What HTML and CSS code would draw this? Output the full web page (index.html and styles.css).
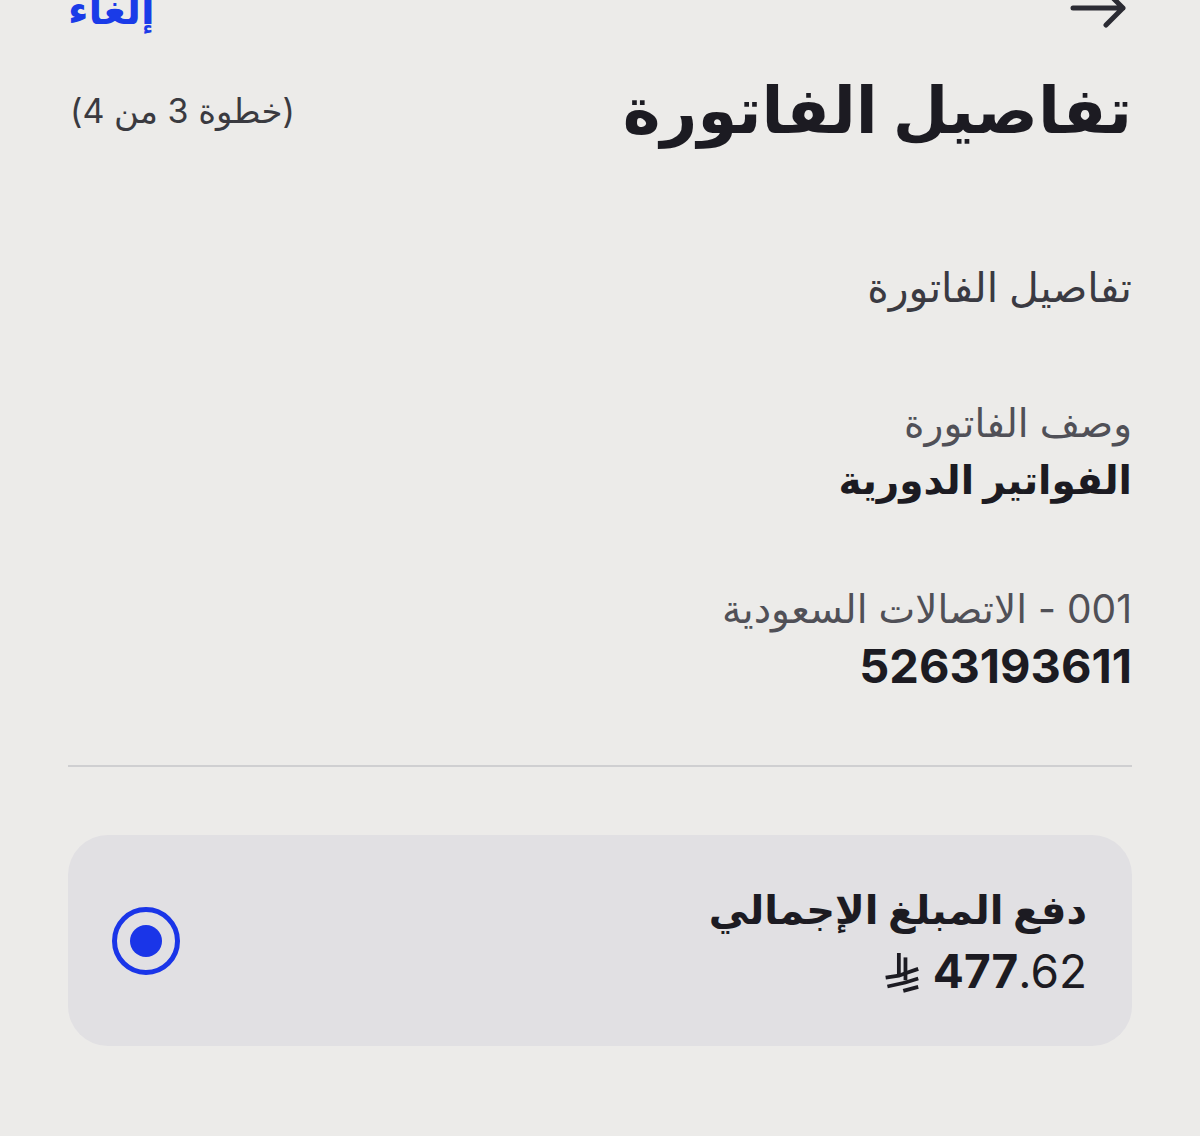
FILE: index.html
```html
<!DOCTYPE html>
<html lang="ar" dir="rtl">
<head>
<meta charset="utf-8">
<title>تفاصيل الفاتورة</title>
<link rel="stylesheet" href="styles.css">
</head>
<body>
<div class="page">
  <div class="topbar">
    <span class="back">
      <svg width="58" height="44" viewBox="0 0 58 44" aria-hidden="true">
        <path d="M3 22 H53 M36 5 L53 22 L36 39" fill="none" stroke="#2b2b33" stroke-width="5" stroke-linecap="round" stroke-linejoin="round"/>
      </svg>
    </span>
    <span class="cancel">إلغاء</span>
  </div>
  <div class="header">
    <h1 class="title">تفاصيل الفاتورة</h1>
    <span class="step">(خطوة 3 من 4)</span>
  </div>
  <h2 class="section">تفاصيل الفاتورة</h2>
  <div class="field">
    <div class="label">وصف الفاتورة</div>
    <div class="value">الفواتير الدورية</div>
  </div>
  <div class="field field-2">
    <div class="label">001 - الاتصالات السعودية</div>
    <div class="value num">5263193611</div>
  </div>
  <hr class="divider">
  <div class="card">
    <div class="card-text">
      <div class="card-title">دفع المبلغ الإجمالي</div>
      <div class="amount"><svg class="riyal" width="37" height="43" viewBox="0 0 42 46" aria-hidden="true"><g fill="none" stroke="#1c1b22" stroke-width="4.3" stroke-linecap="butt"><path d="M18 2 V27"/><path d="M25.5 7 V33"/><path d="M3 30 L18 27.8 L25.5 25 L40 20"/><path d="M5 40 L25.5 35.5 L40 31"/><path d="M23 45 L40 40.5"/></g></svg><span class="int">477</span><span class="dec">.62</span></div>
    </div>
    <span class="radio"><span class="dot"></span></span>
  </div>
</div>
</body>
</html>
```
FILE: styles.css
```css
html, body {
  margin: 0;
  padding: 0;
  background: #ecebe9;
}
body {
  font-family: Inter, "DejaVu Sans", "Noto Sans", sans-serif;
  color: #1c1b22;
}
.page {
  padding: 0 68px;
  direction: rtl;
}
.topbar {
  display: flex;
  justify-content: space-between;
  align-items: center;
  height: 44px;
  margin-top: -14px;
}
.back {
  display: flex;
  margin-right: 4px;
}
.cancel {
  color: #1a3be8;
  font-size: 40px;
  font-weight: 700;
  line-height: 44px;
  margin-top: 4px;
}
.header {
  display: flex;
  justify-content: space-between;
  align-items: center;
  margin-top: 40px;
  height: 80px;
}
.title {
  margin: 0;
  font-size: 64px;
  font-weight: 700;
  line-height: 80px;
}
.step {
  font-size: 34px;
  color: #3a3a40;
  margin-left: 2px;
}
.section {
  margin: 112px 0 0;
  font-size: 41px;
  font-weight: 500;
  color: #3a3a42;
  line-height: 50px;
}
.field {
  margin-top: 84px;
}
.field-2 {
  margin-top: 72px;
}
.label {
  font-size: 39px;
  color: #505057;
  line-height: 54px;
}
.value {
  font-size: 39px;
  font-weight: 700;
  line-height: 60px;
}
.num {
  font-size: 47px;
}
.divider {
  margin: 69px 0 0;
  border: 0;
  height: 2px;
  background: #cfcfd1;
}
.card {
  margin-top: 68px;
  height: 211px;
  background: #e1e0e3;
  border-radius: 40px;
  display: flex;
  justify-content: space-between;
  align-items: center;
  padding: 0 45px 0 44px;
}
.card-title {
  font-size: 40px;
  font-weight: 700;
  line-height: 60px;
}
.amount {
  display: flex;
  direction: ltr;
  justify-content: flex-end;
  align-items: center;
  font-size: 46px;
  line-height: 62px;
}
.amount .int { font-weight: 700; }
.amount .dec { font-weight: 400; }
.riyal {
  margin-right: 13px;
  margin-top: 2px;
}
.radio {
  width: 58px;
  height: 58px;
  border: 5px solid #1a35e8;
  border-radius: 50%;
  display: flex;
  align-items: center;
  justify-content: center;
}
.dot {
  width: 32px;
  height: 32px;
  border-radius: 50%;
  background: #1a35e8;
}
```
